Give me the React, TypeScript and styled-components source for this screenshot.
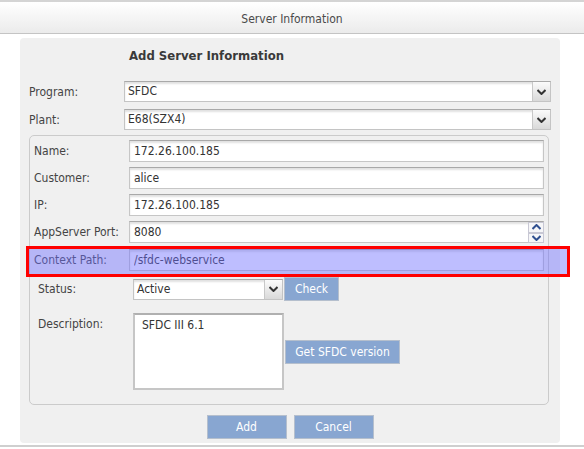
import styled, { createGlobalStyle } from 'styled-components';

const GlobalStyle = createGlobalStyle`
	html, body {
		margin: 0;
		background: #fff;
	}
	body {
		font-family: 'DejaVu Sans Condensed', 'DejaVu Sans', sans-serif;
		font-size: 12px;
		color: #3a3a3a;
	}
`;

const TopRule = styled.div`
	height: 2px;
	background: #d4d4d4;
`;

const Header = styled.header`
	height: 32px;
	box-sizing: border-box;
	padding-top: 2px;
	border-bottom: 1px solid #c4c4c4;
	background: linear-gradient(#ffffff, #ebebeb);
	display: flex;
	align-items: center;
	justify-content: center;
	color: #4a4a4a;
`;

const Panel = styled.section`
	margin: 4px 24px 0 20px;
	height: 405px;
	box-sizing: border-box;
	padding: 10px 9px 0 9px;
	background: #f0f0f0;
	border-radius: 4px;
`;

const Title = styled.h2`
	margin: 0 0 17px 100px;
	font-size: 13px;
	line-height: 16px;
	font-weight: bold;
	color: #3a3a3a;
`;

const Row = styled.div<{ $gap?: number }>`
	display: grid;
	grid-template-columns: 95px 1fr;
	align-items: center;
	margin-bottom: ${(p) => p.$gap ?? 7}px;
	position: relative;
`;

const Label = styled.span`
	color: #444;
	white-space: nowrap;
`;

const SelectBox = styled.div<{ $width: number }>`
	width: ${(p) => p.$width}px;
	height: 21px;
	box-sizing: border-box;
	display: flex;
	align-items: stretch;
	background: #fff;
	border: 1px solid #c4c4c4;
	border-top-color: #a9a9a9;
	box-shadow: inset 0 2px 2px rgba(0, 0, 0, 0.12);
`;

const SelectText = styled.span`
	flex: 1;
	padding-left: 3px;
	line-height: 19px;
	color: #333;
`;

const SelectArrow = styled.span`
	width: 17px;
	border-left: 1px solid #c8c8c8;
	background: linear-gradient(#fbfbfb, #d9d9d9);
	display: flex;
	align-items: center;
	justify-content: center;
`;

const Fieldset = styled.div`
	width: 520px;
	box-sizing: border-box;
	margin-top: 5px;
	padding: 4px 4px 14px 4px;
	border: 1px solid #cbcbcb;
	border-radius: 5px;
`;

const TextInput = styled.input`
	width: 415px;
	height: 22px;
	box-sizing: border-box;
	margin: 0;
	padding: 0 0 0 4px;
	font: inherit;
	color: #333;
	background: #fff;
	border: 1px solid #c6c6c6;
	border-top-color: #a8a8a8;
	box-shadow: inset 0 2px 2px rgba(0, 0, 0, 0.12);
	outline: none;
`;

const SpinWrap = styled.div`
	position: relative;
	width: 415px;
`;

const Spinner = styled.div`
	position: absolute;
	top: 1px;
	right: 0;
	width: 16px;
	height: 21px;
	display: flex;
	flex-direction: column;
`;

const SpinButton = styled.span`
	flex: 1;
	box-sizing: border-box;
	border: 1px solid #c8c8d4;
	background: #f6f6f8;
	display: flex;
	align-items: center;
	justify-content: center;
`;

const Highlight = styled.div`
	position: absolute;
	left: -8px;
	right: -26px;
	top: -3px;
	bottom: -6px;
	border: 3px solid #ff0000;
	background: rgba(110, 110, 255, 0.45);
	pointer-events: none;
`;

const SubRow = styled.div<{ $top: number }>`
	display: grid;
	grid-template-columns: 95px auto 1fr;
	align-items: center;
	margin-top: ${(p) => p.$top}px;
	padding-left: 4px;
`;

const SideAction = styled.div`
	padding-left: 1px;
`;

const DescLabel = styled(Label)`
	align-self: start;
	padding-top: 4px;
`;

const TextArea = styled.textarea`
	width: 151px;
	height: 77px;
	box-sizing: border-box;
	margin: 0;
	padding: 3px 7px;
	resize: none;
	font: inherit;
	color: #333;
	background: #fff;
	border: 2px solid #c6c6c6;
	border-top-color: #b0b0b0;
	outline: none;
`;

const Button = styled.button<{ $width: number }>`
	width: ${(p) => p.$width}px;
	height: 24px;
	margin: 0;
	padding: 0;
	font: inherit;
	color: #fff;
	background: #88a6d1;
	border: 1px solid #b5bfcd;
	cursor: pointer;
`;

const Actions = styled.div`
	display: flex;
	justify-content: center;
	gap: 7px;
	margin-top: 10px;
`;

const BottomRule = styled.div`
	margin-top: 2px;
	height: 2px;
	background: #cfcfcf;
`;

function Chevron({ up, color }: { up?: boolean; color: string }) {
	return (
		<svg width="9" height="6" viewBox="0 0 9 6">
			<path
				d={up ? 'M0.5 5 L4.5 1 L8.5 5' : 'M0.5 1 L4.5 5 L8.5 1'}
				fill="none"
				stroke={color}
				strokeWidth="2"
			/>
		</svg>
	);
}

function Select({ value, width }: { value: string; width: number }) {
	return (
		<SelectBox $width={width}>
			<SelectText>{value}</SelectText>
			<SelectArrow>
				<Chevron color="#333" />
			</SelectArrow>
		</SelectBox>
	);
}

const fields = [
	{ label: 'Name:', value: '172.26.100.185' },
	{ label: 'Customer:', value: 'alice' },
	{ label: 'IP:', value: '172.26.100.185' },
];

export default function App() {
	return (
		<>
			<GlobalStyle />
			<TopRule />
			<Header>Server Information</Header>
			<Panel>
				<Title>Add Server Information</Title>
				<Row>
					<Label>Program:</Label>
					<Select value="SFDC" width={427} />
				</Row>
				<Row $gap={0}>
					<Label>Plant:</Label>
					<Select value="E68(SZX4)" width={427} />
				</Row>
				<Fieldset>
					{fields.map((f) => (
						<Row key={f.label} $gap={5}>
							<Label>{f.label}</Label>
							<TextInput readOnly value={f.value} />
						</Row>
					))}
					<Row $gap={6}>
						<Label>AppServer Port:</Label>
						<SpinWrap>
							<TextInput readOnly value="8080" />
							<Spinner>
								<SpinButton>
									<Chevron up color="#2f4f8f" />
								</SpinButton>
								<SpinButton>
									<Chevron color="#2f4f8f" />
								</SpinButton>
							</Spinner>
						</SpinWrap>
					</Row>
					<Row $gap={0}>
						<Label>Context Path:</Label>
						<TextInput readOnly value="/sfdc-webservice" />
						<Highlight />
					</Row>
					<SubRow $top={6}>
						<Label>Status:</Label>
						<Select value="Active" width={150} />
						<SideAction>
							<Button $width={55}>Check</Button>
						</SideAction>
					</SubRow>
					<SubRow $top={12}>
						<DescLabel>Description:</DescLabel>
						<TextArea readOnly value="SFDC III 6.1" />
						<SideAction>
							<Button $width={115}>Get SFDC version</Button>
						</SideAction>
					</SubRow>
				</Fieldset>
				<Actions>
					<Button $width={80}>Add</Button>
					<Button $width={80}>Cancel</Button>
				</Actions>
			</Panel>
			<BottomRule />
		</>
	);
}
